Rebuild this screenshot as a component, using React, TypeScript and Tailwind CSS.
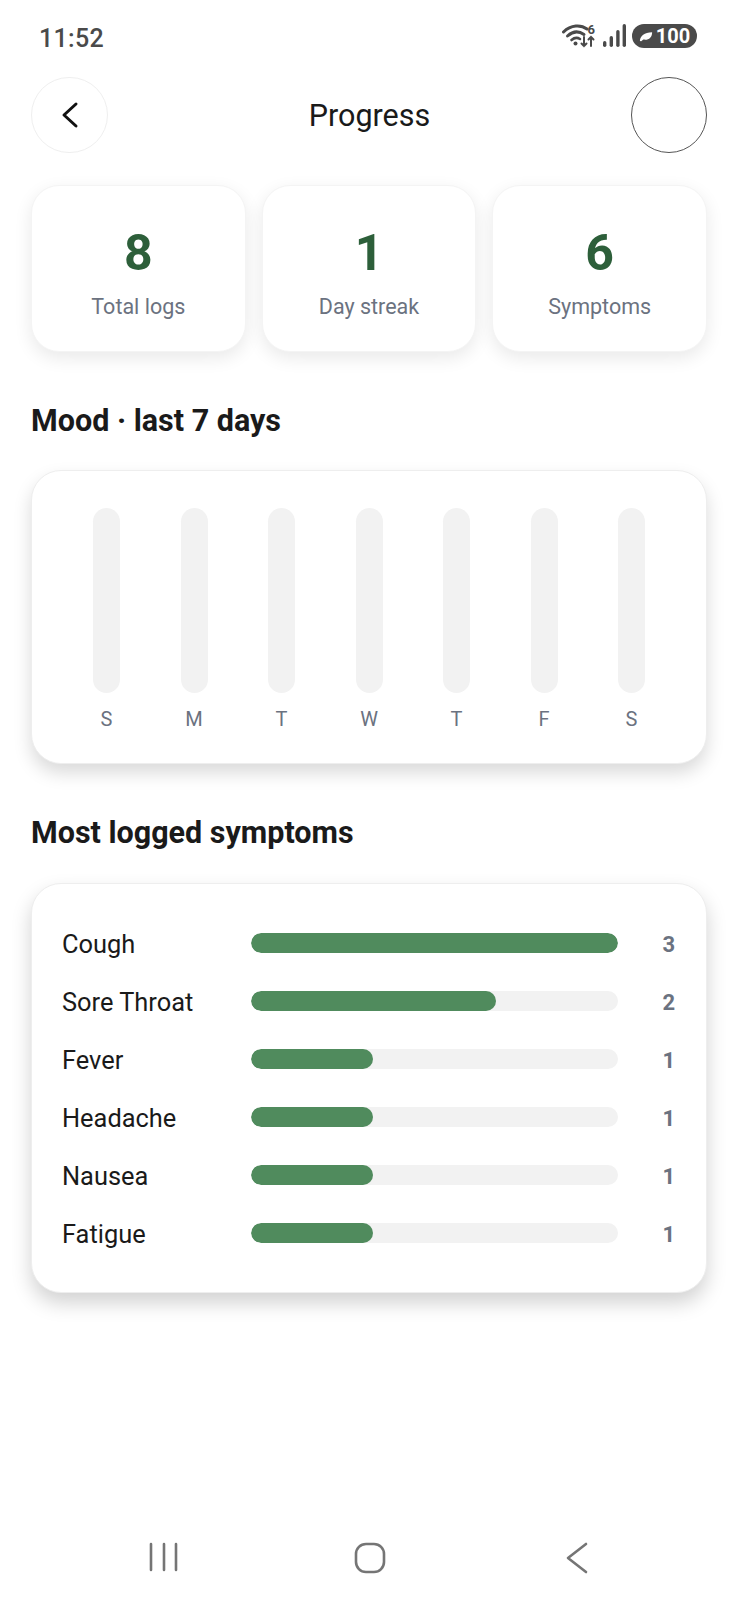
const stats = [
  { value: "8", label: "Total logs" },
  { value: "1", label: "Day streak" },
  { value: "6", label: "Symptoms" },
];

const days = ["S", "M", "T", "W", "T", "F", "S"];

const symptoms = [
  { name: "Cough", count: 3 },
  { name: "Sore Throat", count: 2 },
  { name: "Fever", count: 1 },
  { name: "Headache", count: 1 },
  { name: "Nausea", count: 1 },
  { name: "Fatigue", count: 1 },
];

const StatusIcons = () => (
  <div className="flex items-center">
    <svg width="34" height="26" viewBox="0 0 34 26" fill="none" stroke="#4a4a4a" strokeLinecap="round">
      <path d="M1.5 9 C9 1.5 19 1.5 25 6" strokeWidth="3" />
      <path d="M5.5 13 C11 8 17 8 22 11.5" strokeWidth="3" />
      <path d="M9.5 17 C12.5 14.5 15.5 14.5 18 16" strokeWidth="2.6" />
      <circle cx="13.5" cy="20.5" r="2" fill="#4a4a4a" stroke="none" />
      <path d="M22 14v9M19.5 20.5l2.5 2.5 2.5-2.5" strokeWidth="2" />
      <path d="M29 23V14M26.5 16.5l2.5-2.5 2.5 2.5" strokeWidth="2" />
      <text x="25.5" y="11" fontSize="13" fontWeight="700" fill="#4a4a4a" stroke="none" fontFamily="Roboto, sans-serif">6</text>
    </svg>
    <svg className="ml-[6px]" width="24" height="24" viewBox="0 0 24 24" fill="#4a4a4a">
      <rect x="1" y="17" width="3.4" height="6" rx="1.7" />
      <rect x="7.6" y="12" width="3.4" height="11" rx="1.7" />
      <rect x="14.2" y="6" width="3.4" height="17" rx="1.7" />
      <rect x="20.6" y="0" width="3.4" height="23" rx="1.7" />
    </svg>
    <div className="ml-[6px] flex h-[24px] w-[65px] items-center justify-center gap-[3px] rounded-full bg-[#4a4a4a] text-[20px] font-bold text-white">
      <svg width="14" height="11" viewBox="0 0 16 12" fill="#ffffff">
        <path d="M1 11 C1.5 5 6 1 15 1 C15 7 11 10.5 5 9.5 L2.5 11.5 Z" />
      </svg>
      <span>100</span>
    </div>
  </div>
);

const App = () => {
  return (
    <div className="flex h-[1600px] w-[738px] flex-col bg-white font-['Roboto',sans-serif]">
      <div className="flex h-[77px] items-start justify-between pl-[39px] pr-[41px] pt-[23px]">
        <span className="text-[25px] leading-[32px] font-medium tracking-[0.3px] text-[#4a4a4a]">11:52</span>
        <StatusIcons />
      </div>

      <div className="flex items-center justify-between px-[31px]">
        <div className="flex h-[76px] w-[77px] items-center justify-center rounded-full border border-[#efefef]">
          <svg width="18" height="28" viewBox="0 0 18 28" fill="none" stroke="#111111" strokeWidth="3" strokeLinecap="round" strokeLinejoin="round">
            <path d="M15 3 L3 14 L15 25" />
          </svg>
        </div>
        <span className="pt-[2px] text-[30.5px] leading-[36px] text-[#1a1a1a]">Progress</span>
        <div className="h-[76px] w-[76px] rounded-full border border-[#555555]" />
      </div>

      <div className="mt-[32px] flex gap-[16px] px-[31px]">
        {stats.map((stat) => (
          <div
            key={stat.label}
            className="flex h-[167px] flex-1 flex-col items-center rounded-[28px] border border-[#f4f4f4] bg-white pt-[37px] shadow-[0_6px_18px_rgba(0,0,0,0.09)]"
          >
            <span className="text-[50px] leading-[60px] font-bold text-[#2d5f3a]">{stat.value}</span>
            <span className="mt-[11px] text-[21.5px] leading-[26px] text-[#6b7280]">{stat.label}</span>
          </div>
        ))}
      </div>

      <h2 className="mt-[51px] px-[31px] text-[30.5px] leading-[36px] font-bold text-[#1a1a1a]">Mood · last 7 days</h2>

      <div className="mx-[31px] mt-[31px] flex h-[294px] justify-between rounded-[30px] border border-[#eeeeee] bg-white px-[61px] pt-[37px] shadow-[0_9px_18px_rgba(0,0,0,0.15)]">
        {days.map((day, i) => (
          <div key={i} className="flex w-[27px] flex-col items-center">
            <div className="h-[185px] w-[27px] rounded-full bg-[#f2f2f2]" />
            <span className="mt-[14px] text-[20px] leading-[24px] text-[#6b7280]">{day}</span>
          </div>
        ))}
      </div>

      <h2 className="mt-[51px] px-[31px] text-[30.5px] leading-[36px] font-bold text-[#1a1a1a]">Most logged symptoms</h2>

      <div className="mx-[31px] mt-[32px] flex h-[410px] flex-col gap-[26px] rounded-[30px] border border-[#eeeeee] bg-white px-[30px] pt-[44px] shadow-[0_10px_20px_rgba(0,0,0,0.18)]">
        {symptoms.map((symptom) => (
          <div key={symptom.name} className="flex h-[32px] items-center">
            <span className="w-[189px] text-[25.4px] leading-[32px] text-[#1a1a1a]">{symptom.name}</span>
            <div className="mb-[2px] h-[20px] w-[367px] overflow-hidden rounded-full bg-[#f2f2f2]">
              <div
                className="h-full rounded-full bg-[#508b5d]"
                style={{ width: `${(symptom.count / 3) * 100}%` }}
              />
            </div>
            <span className="flex-1 pr-[1px] text-right text-[22px] font-bold text-[#6b7280]">{symptom.count}</span>
          </div>
        ))}
      </div>

      <div className="mt-auto flex h-[81px] items-start pt-[23px] pl-[149px]">
        <svg width="30" height="30" viewBox="0 0 30 30" fill="none" stroke="#757575" strokeWidth="2.6" strokeLinecap="round">
          <path d="M2 2v26M15 2v26M27 2v26" />
        </svg>
        <svg className="ml-[175px]" width="32" height="32" viewBox="0 0 32 32" fill="none" stroke="#757575" strokeWidth="2.6">
          <rect x="2" y="2" width="28" height="28" rx="10" />
        </svg>
        <svg className="ml-[180px]" width="22" height="32" viewBox="0 0 22 32" fill="none" stroke="#757575" strokeWidth="2.6" strokeLinecap="round" strokeLinejoin="round">
          <path d="M20 2 L2 16 L20 30" />
        </svg>
      </div>
    </div>
  );
};

export default App;
